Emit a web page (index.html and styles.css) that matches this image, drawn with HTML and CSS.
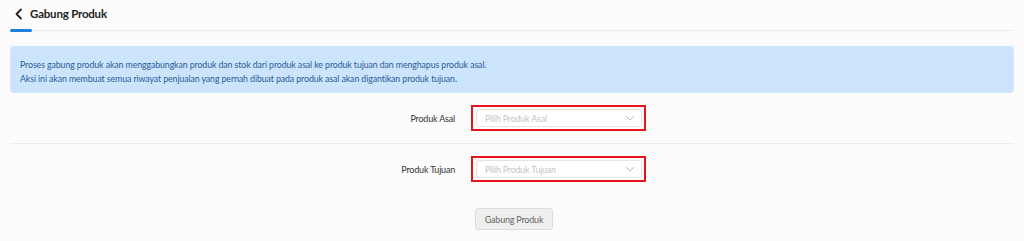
FILE: index.html
```html
<!DOCTYPE html>
<html lang="id">
<head>
	<meta charset="UTF-8">
	<title>Gabung Produk</title>
	<link rel="stylesheet" href="styles.css">
</head>
<body>
	<div class="page">
		<div class="head">
			<span class="back">
				<svg width="10" height="12" viewBox="0 0 10 12"><path d="M7 1.5 2.5 6 7 10.5" fill="none" stroke="#222" stroke-width="1.8" stroke-linecap="round" stroke-linejoin="round"/></svg>
			</span>
			<h2>Gabung Produk</h2>
		</div>
		<div class="tabline"><span class="tabmark"></span></div>

		<div class="notice">
			<p>Proses gabung produk akan menggabungkan produk dan stok dari produk asal ke produk tujuan dan menghapus produk asal.</p>
			<p>Aksi ini akan membuat semua riwayat penjualan yang pernah dibuat pada produk asal akan digantikan produk tujuan.</p>
		</div>

		<div class="row">
			<label class="lbl">Produk Asal</label>
			<div class="mark">
				<div class="select">
					<span>Pilih Produk Asal</span>
					<svg width="10" height="6" viewBox="0 0 10 6"><path d="M1 1 5 5 9 1" fill="none" stroke="#bbb" stroke-width="1"/></svg>
				</div>
			</div>
		</div>
		<div class="sep"></div>
		<div class="row">
			<label class="lbl">Produk Tujuan</label>
			<div class="mark">
				<div class="select">
					<span>Pilih Produk Tujuan</span>
					<svg width="10" height="6" viewBox="0 0 10 6"><path d="M1 1 5 5 9 1" fill="none" stroke="#bbb" stroke-width="1"/></svg>
				</div>
			</div>
		</div>
		<div class="actions">
			<button class="btn">Gabung Produk</button>
		</div>
	</div>
</body>
</html>
```
FILE: styles.css
```css
* {box-sizing: border-box;}
body {margin: 0; background: #fcfcfc; font-family: "Lato", "Liberation Sans", sans-serif; color: #333;}
p, h2 {margin: 0;}
.page {padding: 0 10px;}
.head {display: flex; align-items: center; height: 29px; padding: 0 0 2px 4px;}
.back {display: flex; width: 16px;}
.head h2 {font-size: 11.5px; font-weight: 700; letter-spacing: -0.2px; color: #222;}
.tabline {height: 3px; display: flex; align-items: center; background: linear-gradient(#ececec, #ececec) 0 1px / 100% 1px no-repeat; margin-bottom: 14px;}
.tabmark {width: 22px; height: 3px; border-radius: 2px; background: #1a7fe0;}
.notice {background: #cce5fd; border-radius: 4px; padding: 12px 10px 9px; color: #2b5a98; font-size: 8.8px; letter-spacing: -0.1px; line-height: 14px; height: 47px;}
.row {display: flex; align-items: center; height: 50px;}
.lbl {width: 461px; text-align: right; padding-right: 16px; font-size: 9px; letter-spacing: -0.2px; color: #333;}
.mark {border: 2px solid #e8141c; padding: 2px 2px 2px 3px; width: 175px; height: 26px;}
.select {display: flex; align-items: center; justify-content: space-between; height: 18px; border: 1px solid #e4e4e4; border-radius: 3px; background: #fff; padding: 0 6px 0 8px; font-size: 8.8px; letter-spacing: -0.15px; color: #c4c4c4;}
.sep {height: 1px; background: #ececec;}
.actions {display: flex; padding: 14px 0 0 465px;}
.btn {font-family: inherit; font-size: 9px; letter-spacing: -0.2px; color: #666; background: #efefef; border: 1px solid #dcdcdc; border-radius: 3px; height: 22px; width: 78px; padding: 0;}
```
